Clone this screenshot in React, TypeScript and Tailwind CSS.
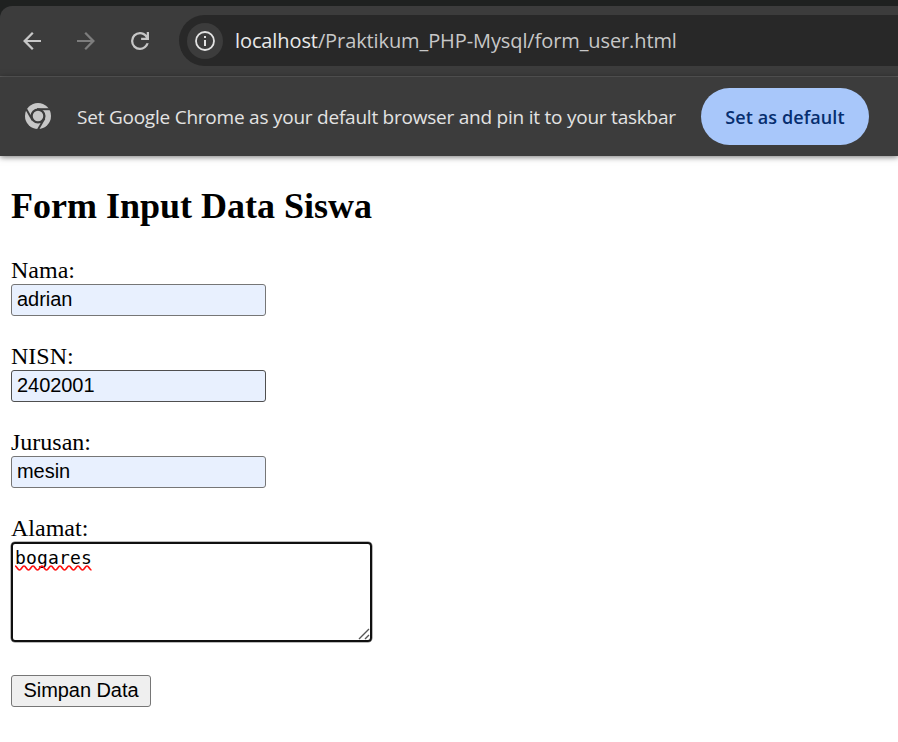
import type { ReactNode } from "react";

const uiFont = "font-['Open_Sans','Noto_Sans',sans-serif]";
const serif = "font-['Liberation_Serif','Times_New_Roman',serif]";
const sans = "font-['Liberation_Sans',Arial,sans-serif]";

function ToolbarIcon({ d, className }: { d: string; className: string }) {
  return (
    <svg viewBox="-18 -978 996 996" className={`size-7 fill-current ${className}`}>
      <path d={d} />
    </svg>
  );
}

function ChromeLogo() {
  return (
    <svg viewBox="-13 -13 26 26" className="mb-px size-[26px] shrink-0">
      <circle r="13" fill="#c7c7c7" />
      <g stroke="#3c3c3c" strokeWidth="2">
        <path d="M-1 -6.8H14" />
        <path d="M-1 -6.8H14" transform="rotate(120)" />
        <path d="M-1 -6.8H14" transform="rotate(240)" />
      </g>
      <circle r="6.4" fill="#c7c7c7" stroke="#3c3c3c" strokeWidth="2.3" />
    </svg>
  );
}

function Field({ label, value, border }: { label: string; value: string; border: string }) {
  return (
    <label className="block h-[86px]">
      <span className="block h-[27px] text-[24px] leading-[27px]">{label}</span>
      <input
        defaultValue={value}
        className={`block h-8 w-[255px] rounded-[3px] border bg-[#e8f0fe] px-[5px] pb-[2px] text-[20px] leading-[23px] tracking-[-0.05px] text-black outline-none ${border} ${sans}`}
      />
    </label>
  );
}

function Toolbar({ children }: { children?: ReactNode }) {
  return (
    <div className="bg-[#1f2120] pt-1.5">
      <div className="flex h-[71px] rounded-tl-xl border-b border-[#5e5e5e] bg-[#3c3c3c] pt-[9px]">
        <div className="flex h-[51px] w-[179px] shrink-0 items-center gap-[26px] pl-[18px] pt-px">{children}</div>
        <div className="flex h-[51px] flex-1 items-center rounded-l-full bg-[#282828] pl-2">
          <div className="flex size-9 items-center justify-center rounded-full bg-[#3c3c3c]">
            <svg viewBox="0 0 20 20" className="size-5">
              <circle cx="10" cy="10" r="9" fill="none" stroke="#e3e3e3" strokeWidth="1.8" />
              <path d="M9 5h2v2H9zM9 9h2v6H9z" fill="#e3e3e3" />
            </svg>
          </div>
          <div className={`ml-[12px] whitespace-nowrap text-[20px] leading-[27px] tracking-[-0.1px] text-[#c7c7c7] ${uiFont}`}>
            <span className="text-[#e8e8e8]">localhost</span>/Praktikum_PHP-Mysql/form_user.html
          </div>
        </div>
      </div>
    </div>
  );
}

export default function App() {
  return (
    <div className="h-[742px] w-[898px] overflow-hidden bg-white text-black">
      <Toolbar>
        <ToolbarIcon className="text-[#c7c7c7]" d="m313-440 224 224-57 56-320-320 320-320 57 56-224 224h487v80H313Z" />
        <ToolbarIcon className="text-[#7d7d7d]" d="M647-440H160v-80h487L423-744l57-56 320 320-320 320-57-56 224-224Z" />
        <ToolbarIcon
          className="text-[#c7c7c7]"
          d="M480-160q-134 0-227-93t-93-227q0-134 93-227t227-93q69 0 132 28.5T720-690v-110h80v280H520v-80h168q-32-56-87.5-88T480-720q-100 0-170 70t-70 170q0 100 70 170t170 70q77 0 139-44t87-116h84q-28 106-114 173t-196 67Z"
        />
      </Toolbar>
      <div className={`flex h-[79px] items-center bg-[#3c3c3c] pl-[25px] shadow-[0_1px_6px_rgba(0,0,0,0.55)] ${uiFont}`}>
        <ChromeLogo />
        <p className="ml-[26px] w-[624px] whitespace-nowrap pt-px text-[19px] leading-7 tracking-[-0.23px] text-[#e3e3e3]">
          Set Google Chrome as your default browser and pin it to your taskbar
        </p>
        <button className="h-[57px] w-[168px] rounded-full bg-[#a8c7fa] pt-px text-[18px] font-semibold tracking-[0.1px] text-[#062e6f]">
          Set as default
        </button>
      </div>
      <main className={`pl-[11px] pt-[30px] ${serif}`}>
        <h2 className="h-[71px] text-[36px] font-bold leading-[41px]">Form Input Data Siswa</h2>
        <Field label="Nama:" value="adrian" border="border-[#767676]" />
        <Field label="NISN:" value="2402001" border="border-[#4f4f4f]" />
        <Field label="Jurusan:" value="mesin" border="border-[#767676]" />
        <div className="h-[27px] text-[24px] leading-[27px]">Alamat:</div>
        <div className="relative flex h-[100px] w-[361px] rounded-[4px] border-[2px] border-[#101010] px-[2px] pt-[2px] shadow-[0_0_0_0.5px_#777]">
          <div className="h-[23px] font-['DejaVu_Sans_Mono',monospace] text-[18px] leading-[23px] tracking-[0.15px]">
            bogares
            <svg viewBox="0 0 78 6" className="-mt-[4px] block h-[6px] w-[78px] fill-none stroke-[#ff1010]">
              <path
                strokeWidth="1.6"
                d="M0 1c2 0 2.5 4 4.5 4s2.5-4 4.5-4 2.5 4 4.5 4 2.5-4 4.5-4 2.5 4 4.5 4 2.5-4 4.5-4 2.5 4 4.5 4 2.5-4 4.5-4 2.5 4 4.5 4 2.5-4 4.5-4 2.5 4 4.5 4 2.5-4 4.5-4 2.5 4 4.5 4 2.5-4 4.5-4 2.5 4 4.5 4 2.5-4 4.5-4 2.5 4 4.5 4"
              />
            </svg>
          </div>
          <svg viewBox="0 0 12 12" className="absolute bottom-0 right-0 size-3 fill-none stroke-[#555]">
            <path strokeWidth="1.4" d="M1 11 11 1M7 11l4-4" />
          </svg>
        </div>
        <button
          className={`mt-[33px] block h-8 w-[140px] rounded-[3px] border border-[#767676] bg-[#efefef] pb-[2px] text-[20px] leading-[23px] tracking-[-0.05px] ${sans}`}
        >
          Simpan Data
        </button>
      </main>
    </div>
  );
}
